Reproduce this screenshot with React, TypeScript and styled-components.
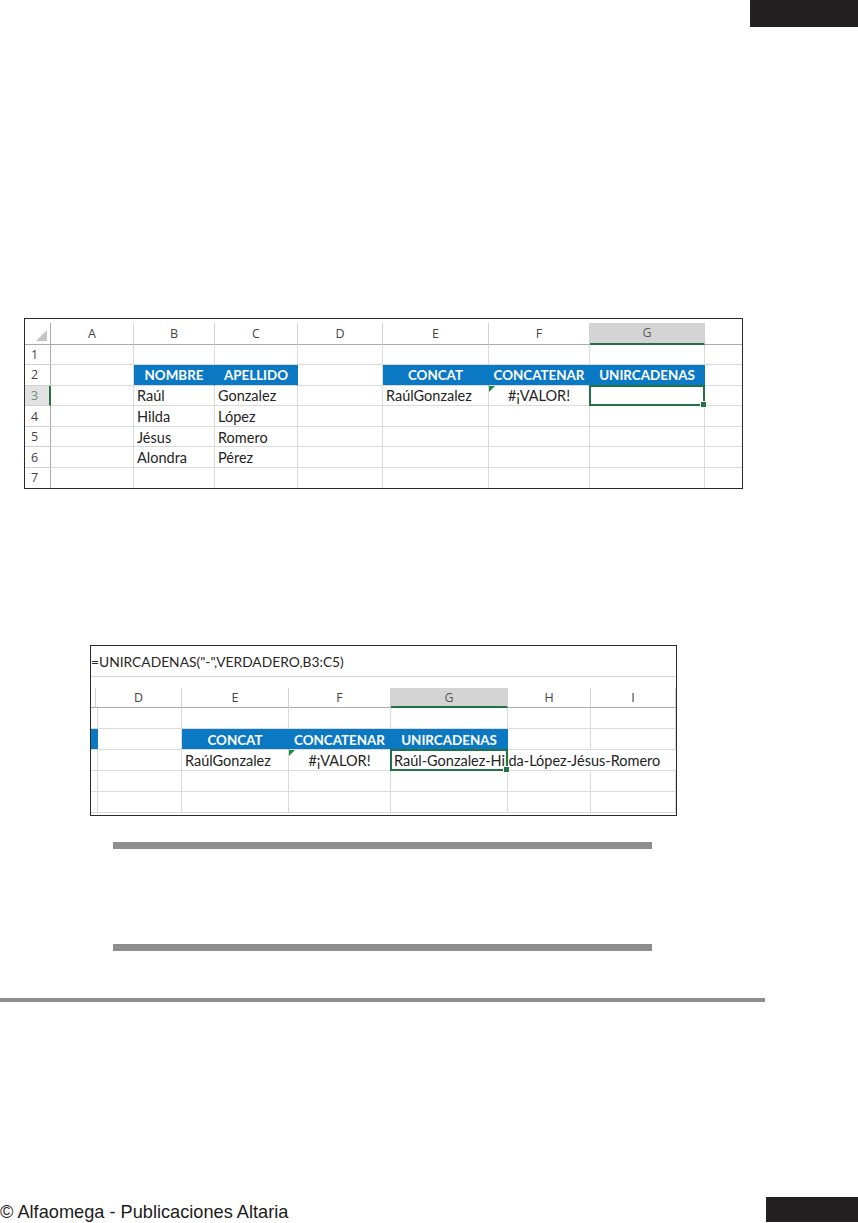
import React from 'react';
import styled, { createGlobalStyle, css } from 'styled-components';

type CellData = {
  text?: string;
  head?: boolean;
  center?: boolean;
  flag?: boolean;
  selected?: boolean;
  spill?: boolean;
  open?: boolean;
};

type SheetRow = { num?: string; active?: boolean; cells: CellData[] };

const GlobalStyle = createGlobalStyle`
  html, body {
    margin: 0;
    padding: 0;
    background: #ffffff;
  }
  body {
    font-family: "Liberation Sans", Arial, sans-serif;
  }
`;

const Page = styled.div`
  width: 858px;
  height: 1223px;
  display: flex;
  flex-direction: column;
  overflow: hidden;
  background: #ffffff;
`;

const TopTab = styled.div`
  align-self: flex-end;
  width: 108px;
  height: 27px;
  background: #231f20;
`;

const Frame = styled.div<{ $left: number; $top: number; $width: number }>`
  margin-left: ${p => p.$left}px;
  margin-top: ${p => p.$top}px;
  width: ${p => p.$width}px;
  height: 171px;
  box-sizing: border-box;
  border: 1.5px solid #2a2a2a;
  overflow: hidden;
  background: #ffffff;
`;

const FormulaBar = styled.div`
  height: 31px;
  box-sizing: border-box;
  display: flex;
  align-items: center;
  padding-left: 0;
  border-bottom: 1px solid #d6d6d6;
  font-family: Lato, "Open Sans", sans-serif;
  font-size: 13.8px;
  color: #262626;
  white-space: nowrap;
`;

const Grid = styled.div<{ $cols: string; $head: number; $row: number }>`
  display: grid;
  grid-template-columns: ${p => p.$cols};
  grid-template-rows: ${p => p.$head}px;
  grid-auto-rows: ${p => p.$row}px;
  font-family: Lato, "Open Sans", sans-serif;
`;

const Corner = styled.div<{ $gap: number }>`
  position: relative;
  margin-top: ${p => p.$gap}px;
  border-right: 1px solid #ababab;
  border-bottom: 1px solid #ababab;

  &::after {
    content: '';
    position: absolute;
    right: 3px;
    bottom: 3px;
    border-left: 11px solid transparent;
    border-bottom: 11px solid #c4c4c4;
  }
`;

const ColHead = styled.div<{ $gap: number; $active?: boolean }>`
  position: relative;
  margin-top: ${p => p.$gap}px;
  display: flex;
  align-items: center;
  justify-content: center;
  box-sizing: border-box;
  font-family: "Open Sans", "Noto Sans", sans-serif;
  font-size: 12.5px;
  color: #444444;
  border-right: 1px solid #d2d2d2;
  border-bottom: 1px solid #ababab;
  white-space: nowrap;
  overflow: hidden;

  ${p =>
    p.$active &&
    css`
      background: #d4d4d4;
      border-bottom: 2px solid #217346;
      color: #5a5a5a;
    `}
`;

const RowNum = styled.div<{ $active?: boolean }>`
  display: flex;
  align-items: center;
  padding-left: 6px;
  box-sizing: border-box;
  font-family: "Open Sans", "Noto Sans", sans-serif;
  font-size: 12.5px;
  color: #444444;
  border-right: 1px solid #ababab;
  border-bottom: 1px solid #d0d0d0;

  ${p =>
    p.$active &&
    css`
      background: #e2e2e2;
      color: #6b8f78;
      border-right: 2px solid #217346;
    `}
`;

const Cell = styled.div<{ $head?: boolean; $center?: boolean; $open?: boolean }>`
  position: relative;
  display: flex;
  align-items: center;
  justify-content: ${p => (p.$center ? 'center' : 'flex-start')};
  padding: 1px 3px 0;
  box-sizing: border-box;
  font-size: 14.5px;
  color: #232323;
  white-space: nowrap;
  border-right: 1px solid ${p => (p.$open ? 'transparent' : '#dadada')};
  border-bottom: 1px solid #dadada;

  ${p =>
    p.$head &&
    css`
      justify-content: center;
      background: #0b78c4;
      color: #ffffff;
      font-size: 13.4px;
      font-weight: 700;
      border-right-color: #0b78c4;
    `}
`;

const Spill = styled.span`
  position: relative;
  z-index: 1;
`;

const ErrorFlag = styled.span`
  position: absolute;
  left: 0;
  top: 0;
  border-top: 6px solid #1f8a3c;
  border-right: 6px solid transparent;
`;

const Selection = styled.span`
  position: absolute;
  left: -1px;
  top: -1px;
  right: -1px;
  bottom: -1px;
  border: 2px solid #217346;
  z-index: 2;
  pointer-events: none;
`;

const Handle = styled.span`
  position: absolute;
  right: -4px;
  bottom: -4px;
  width: 5px;
  height: 5px;
  background: #217346;
  border: 1px solid #ffffff;
`;

const Rule = styled.div<{ $top: number; $left: number; $width: number; $height: number }>`
  margin-top: ${p => p.$top}px;
  margin-left: ${p => p.$left}px;
  width: ${p => p.$width}px;
  height: ${p => p.$height}px;
  background: #8e8e8e;
`;

const Footer = styled.footer`
  margin-top: auto;
  display: flex;
  justify-content: space-between;
  align-items: flex-end;
`;

const Credit = styled.span`
  font-family: "Liberation Sans", Arial, sans-serif;
  font-size: 18.2px;
  line-height: 1;
  color: #1c1c1c;
  padding-bottom: 2px;
`;

const BottomTab = styled.div`
  width: 92px;
  height: 25px;
  margin-bottom: 1px;
  background: #231f20;
`;

const DataCell = ({ cell }: { cell: CellData }) => (
  <Cell $head={cell.head} $center={cell.center} $open={cell.open}>
    {cell.flag && <ErrorFlag />}
    {cell.spill ? <Spill>{cell.text}</Spill> : cell.text}
    {cell.selected && (
      <Selection>
        <Handle />
      </Selection>
    )}
  </Cell>
);

const Sheet = ({
  columns,
  widths,
  active,
  rows,
  head,
  gap,
  rowHeight,
  rowNumbers,
}: {
  columns: string[];
  widths: number[];
  active: string;
  rows: SheetRow[];
  head: number;
  gap: number;
  rowHeight: number;
  rowNumbers?: boolean;
}) => {
  const cols = (rowNumbers ? ['26px'] : []).concat(widths.map(w => `${w}px`)).join(' ');
  return (
    <Grid $cols={cols} $head={head} $row={rowHeight}>
      {rowNumbers && <Corner $gap={gap} />}
      {columns.map((c, i) => (
        <ColHead key={`h${i}`} $gap={gap} $active={c === active}>
          {c}
        </ColHead>
      ))}
      {rows.map((r, ri) => (
        <React.Fragment key={`r${ri}`}>
          {rowNumbers && <RowNum $active={r.active}>{r.num}</RowNum>}
          {r.cells.map((cell, ci) => (
            <DataCell key={`c${ri}-${ci}`} cell={cell} />
          ))}
        </React.Fragment>
      ))}
    </Grid>
  );
};

const fill = (count: number, set: Record<number, CellData>): CellData[] =>
  Array.from({ length: count }, (_, i) => set[i] ?? {});

const firstRows: SheetRow[] = [
  { num: '1', cells: fill(8, {}) },
  {
    num: '2',
    cells: fill(8, {
      1: { text: 'NOMBRE', head: true },
      2: { text: 'APELLIDO', head: true },
      4: { text: 'CONCAT', head: true },
      5: { text: 'CONCATENAR', head: true },
      6: { text: 'UNIRCADENAS', head: true },
    }),
  },
  {
    num: '3',
    active: true,
    cells: fill(8, {
      1: { text: 'Raúl' },
      2: { text: 'Gonzalez' },
      4: { text: 'RaúlGonzalez' },
      5: { text: '#¡VALOR!', center: true, flag: true },
      6: { selected: true },
    }),
  },
  { num: '4', cells: fill(8, { 1: { text: 'Hilda' }, 2: { text: 'López' } }) },
  { num: '5', cells: fill(8, { 1: { text: 'Jésus' }, 2: { text: 'Romero' } }) },
  { num: '6', cells: fill(8, { 1: { text: 'Alondra' }, 2: { text: 'Pérez' } }) },
  { num: '7', cells: fill(8, {}) },
];

const secondRows: SheetRow[] = [
  { cells: fill(8, {}) },
  {
    cells: fill(8, {
      0: { head: true },
      2: { text: 'CONCAT', head: true },
      3: { text: 'CONCATENAR', head: true },
      4: { text: 'UNIRCADENAS', head: true },
    }),
  },
  {
    cells: fill(8, {
      2: { text: 'RaúlGonzalez' },
      3: { text: '#¡VALOR!', center: true, flag: true },
      4: { text: 'Raúl-Gonzalez-Hilda-López-Jésus-Romero', spill: true, selected: true },
      5: { open: true },
      6: { open: true },
    }),
  },
  { cells: fill(8, {}) },
  { cells: fill(8, {}) },
];

export default function App() {
  return (
    <>
      <GlobalStyle />
      <Page>
        <TopTab />

        <Frame $left={24} $top={291} $width={719}>
          <Sheet
            rowNumbers
            columns={['A', 'B', 'C', 'D', 'E', 'F', 'G', 'H']}
            widths={[83, 81, 83, 85, 106, 101, 115, 83]}
            active="G"
            rows={firstRows}
            head={25.5}
            gap={4}
            rowHeight={20.6}
          />
        </Frame>

        <Frame $left={90} $top={156} $width={587}>
          <FormulaBar>=UNIRCADENAS("-",VERDADERO,B3:C5)</FormulaBar>
          <Sheet
            columns={['', 'D', 'E', 'F', 'G', 'H', 'I', '']}
            widths={[5, 86, 107, 102, 117, 83, 85, 40]}
            active="G"
            rows={secondRows}
            head={31}
            gap={11}
            rowHeight={21}
          />
        </Frame>

        <Rule $top={26} $left={113} $width={539} $height={7} />
        <Rule $top={95} $left={113} $width={539} $height={7} />
        <Rule $top={47} $left={0} $width={765} $height={4} />

        <Footer>
          <Credit>© Alfaomega - Publicaciones Altaria</Credit>
          <BottomTab />
        </Footer>
      </Page>
    </>
  );
}
